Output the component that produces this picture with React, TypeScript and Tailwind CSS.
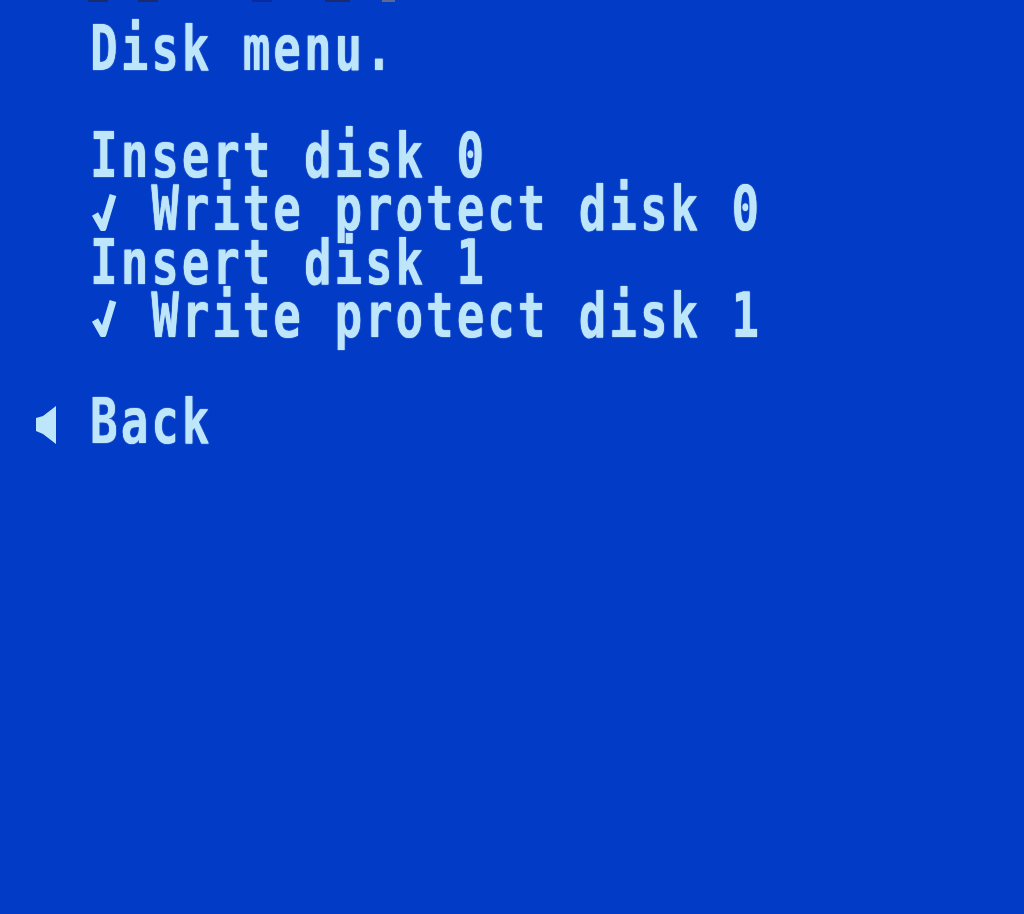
import React from "react";

const ROW = "h-[53.3px] flex items-start";
const TXT =
  "inline-block whitespace-pre origin-top scale-y-[1.343] font-['DejaVu_Sans_Mono',monospace] font-bold text-[46px] leading-[36px] tracking-[2.85px] text-[#bde6fb] [text-shadow:0_0_1px_#e6f6ff]";

function Check() {
  return (
    <svg width="30.55" height="53.3" viewBox="0 0 30.55 53.3" className="shrink-0 -mt-[6.7px]">
      <polyline
        points="5,36 13,50 23,17"
        fill="none"
        stroke="#bde6fb"
        strokeWidth="7"
        strokeLinejoin="round"
      />
    </svg>
  );
}

function Arrow() {
  return (
    <svg width="30.55" height="53.3" viewBox="0 0 30.55 53.3" className="shrink-0 -mt-[6.7px]">
      <polygon points="7,27 14,25 27,15 27,53 14,43 7,40" fill="#bde6fb" />
    </svg>
  );
}

export default function App() {
  return (
    <div className="w-full h-[914px] overflow-hidden bg-[#013bc6]">
      <div className="flex h-[2px]">
        <span className="ml-[88px] w-[20px] bg-[#1a2a6a]" />
        <span className="ml-[30px] w-[20px] bg-[#1a2a6a]" />
        <span className="ml-[94px] w-[20px] bg-[#0a2aa0]" />
        <span className="ml-[53px] w-[25px] bg-[#1a2a6a]" />
        <span className="ml-[32px] w-[13px] bg-[#5a6a90]" />
      </div>
      <div className="pt-[22.4px] pl-[29px]">
        <div className={ROW}>
          <span className={TXT}>{"  Disk menu."}</span>
        </div>
        <div className={ROW} />
        <div className={ROW}>
          <span className={TXT}>{"  Insert disk 0"}</span>
        </div>
        <div className={ROW}>
          <span className="w-[61.1px] shrink-0" />
          <Check />
          <span className={TXT}>{" Write protect disk 0"}</span>
        </div>
        <div className={ROW}>
          <span className={TXT}>{"  Insert disk 1"}</span>
        </div>
        <div className={ROW}>
          <span className="w-[61.1px] shrink-0" />
          <Check />
          <span className={TXT}>{" Write protect disk 1"}</span>
        </div>
        <div className={ROW} />
        <div className={ROW}>
          <Arrow />
          <span className={TXT}>{" Back"}</span>
        </div>
      </div>
    </div>
  );
}
